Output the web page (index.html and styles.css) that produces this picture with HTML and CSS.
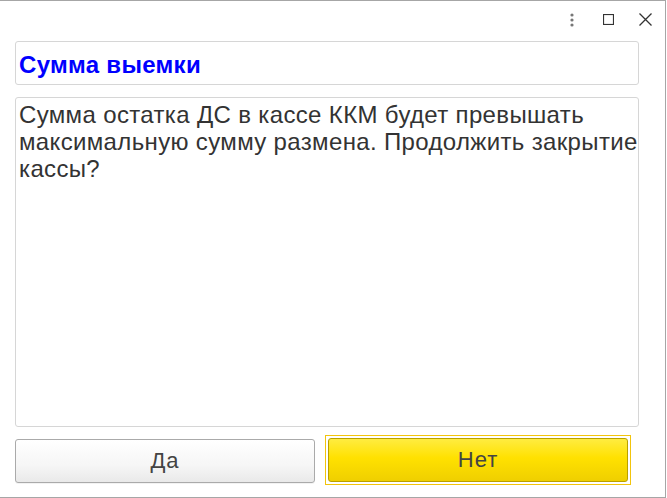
FILE: index.html
```html
<!DOCTYPE html>
<html lang="ru">
<head>
    <meta charset="UTF-8">
    <title>Сумма выемки</title>
    <link rel="stylesheet" href="styles.css">
</head>
<body>
    <div class="window">
        <div class="titlebar">
            <span class="tb-btn">
                <svg width="6" height="14" viewBox="0 0 6 14"><circle cx="3" cy="2" r="1.6" fill="#777"/><circle cx="3" cy="7" r="1.6" fill="#777"/><circle cx="3" cy="12" r="1.6" fill="#777"/></svg>
            </span>
            <span class="tb-btn">
                <svg width="11" height="11" viewBox="0 0 11 11"><rect x="0.5" y="0.5" width="10" height="10" fill="none" stroke="#333" stroke-width="1.2"/></svg>
            </span>
            <span class="tb-btn">
                <svg width="13" height="13" viewBox="0 0 13 13"><path d="M0.5 0.5 L12.5 12.5 M12.5 0.5 L0.5 12.5" stroke="#333" stroke-width="1.3"/></svg>
            </span>
        </div>

        <div class="content">
            <div class="header-box">Сумма выемки</div>
            <div class="message-box">Сумма остатка ДС в кассе ККМ будет превышать максимальную сумму размена. Продолжить закрытие кассы?</div>
            <div class="buttons">
                <button class="btn btn-yes">Да</button>
                <span class="btn-focus"><button class="btn btn-no">Нет</button></span>
            </div>
        </div>
    </div>
</body>
</html>
```

FILE: styles.css
```css
* {
    margin: 0;
    padding: 0;
    box-sizing: border-box;
}

body {
    font-family: 'Liberation Sans', Arial, sans-serif;
    background-color: #fff;
    width: 667px;
    height: 498px;
    overflow: hidden;
}

.window {
    width: 666px;
    height: 498px;
    background-color: #fff;
    border-top: 1px solid #a6a6a6;
    border-right: 1px solid #a6a6a6;
    border-bottom: 1px solid #a6a6a6;
    display: flex;
    flex-direction: column;
}

.titlebar {
    height: 40px;
    display: flex;
    justify-content: flex-end;
    align-items: center;
    padding-right: 1px;
    padding-bottom: 3px;
}

.tb-btn {
    width: 37px;
    height: 30px;
    display: flex;
    align-items: center;
    justify-content: center;
}

.content {
    padding: 0 26px 0 15px;
    display: flex;
    flex-direction: column;
}

.header-box {
    height: 44px;
    border: 1px solid #d6d6d6;
    border-radius: 3px;
    padding: 9px 3px 0;
    color: #0000ff;
    font-weight: bold;
    font-size: 24px;
    line-height: 27px;
    letter-spacing: 0.3px;
}

.message-box {
    height: 330px;
    margin-top: 12px;
    border: 1px solid #d6d6d6;
    border-radius: 3px;
    padding: 3px 0 3px 3px;
    color: #333;
    font-size: 24px;
    line-height: 27px;
    letter-spacing: 0.35px;
}

.buttons {
    display: flex;
    margin-top: 8px;
    gap: 10px;
}

.btn {
    height: 44px;
    width: 300px;
    border-radius: 3px;
    font-family: 'Liberation Sans', Arial, sans-serif;
    font-size: 22px;
    letter-spacing: 1px;
    color: #444;
    cursor: pointer;
}

.btn-yes {
    margin-top: 4px;
    border: 1px solid #aaa;
    background: linear-gradient(#ffffff, #f6f6f6 60%, #e9e9e9);
    box-shadow: 0 1px 0 rgba(0, 0, 0, 0.05);
}

.btn-focus {
    padding: 2px;
    border: 1px solid #f2c40c;
}

.btn-no {
    display: block;
    border: 1px solid #b8a000;
    background: linear-gradient(#ffec40, #ffe100 45%, #efcf00);
}
```
